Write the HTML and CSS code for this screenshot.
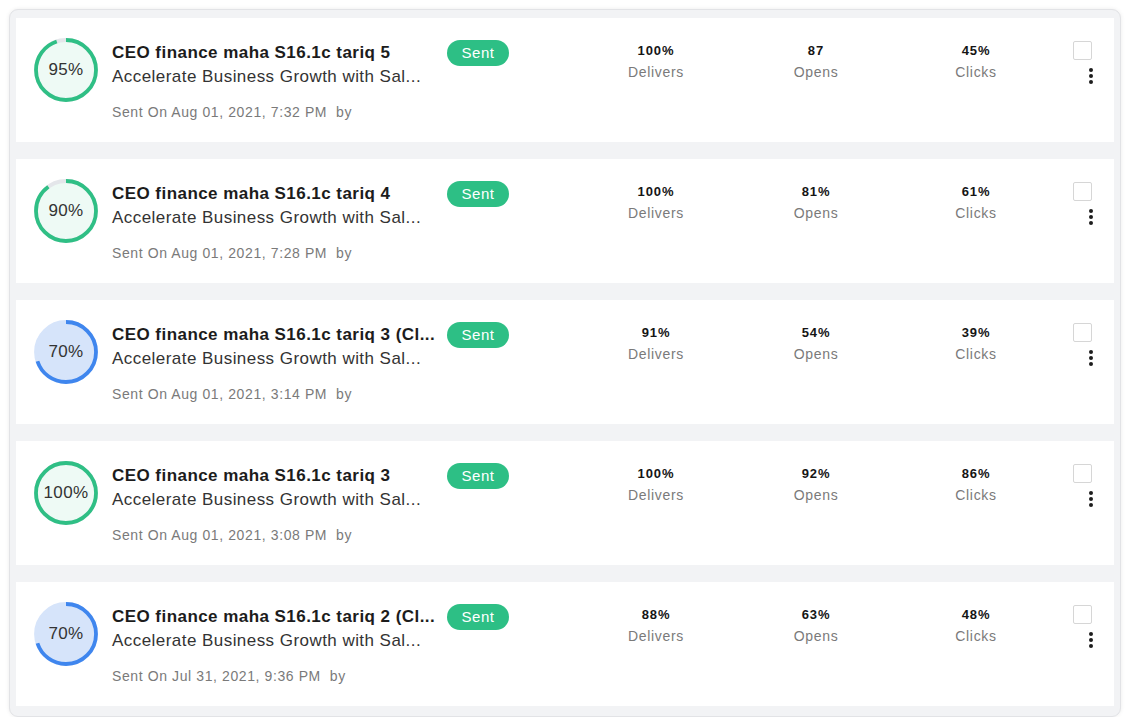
FILE: index.html
```html
<!DOCTYPE html>
<html>
<head>
<meta charset="utf-8">
<link rel="stylesheet" href="styles.css">
</head>
<body>
<div class="frame">
  <div class="card">
    <div class="ring green">
      <svg viewBox="0 0 64 64" width="64" height="64"><circle class="bg" cx="32" cy="32" r="30"/><circle class="arc" cx="32" cy="32" r="30" pathLength="100" stroke-dasharray="95 100" transform="rotate(-90 32 32)"/></svg>
      <span class="pct">95%</span>
    </div>
    <div class="main">
      <div class="title">CEO finance maha S16.1c tariq 5</div>
      <div class="sub">Accelerate Business Growth with Sal...</div>
      <div class="meta">Sent On Aug 01, 2021, 7:32 PM &nbsp;by</div>
    </div>
    <div class="badge">Sent</div>
    <div class="stats">
      <div class="stat"><b>100%</b><span>Delivers</span></div>
      <div class="stat"><b>87</b><span>Opens</span></div>
      <div class="stat"><b>45%</b><span>Clicks</span></div>
    </div>
    <div class="actions"><div class="check"></div><div class="kebab"><i></i><i></i><i></i></div></div>
  </div>

  <div class="card">
    <div class="ring green">
      <svg viewBox="0 0 64 64" width="64" height="64"><circle class="bg" cx="32" cy="32" r="30"/><circle class="arc" cx="32" cy="32" r="30" pathLength="100" stroke-dasharray="90 100" transform="rotate(-90 32 32)"/></svg>
      <span class="pct">90%</span>
    </div>
    <div class="main">
      <div class="title">CEO finance maha S16.1c tariq 4</div>
      <div class="sub">Accelerate Business Growth with Sal...</div>
      <div class="meta">Sent On Aug 01, 2021, 7:28 PM &nbsp;by</div>
    </div>
    <div class="badge">Sent</div>
    <div class="stats">
      <div class="stat"><b>100%</b><span>Delivers</span></div>
      <div class="stat"><b>81%</b><span>Opens</span></div>
      <div class="stat"><b>61%</b><span>Clicks</span></div>
    </div>
    <div class="actions"><div class="check"></div><div class="kebab"><i></i><i></i><i></i></div></div>
  </div>

  <div class="card">
    <div class="ring blue">
      <svg viewBox="0 0 64 64" width="64" height="64"><circle class="bg" cx="32" cy="32" r="30"/><circle class="arc" cx="32" cy="32" r="30" pathLength="100" stroke-dasharray="70 100" transform="rotate(-90 32 32)"/></svg>
      <span class="pct">70%</span>
    </div>
    <div class="main">
      <div class="title">CEO finance maha S16.1c tariq 3 (Cl...</div>
      <div class="sub">Accelerate Business Growth with Sal...</div>
      <div class="meta">Sent On Aug 01, 2021, 3:14 PM &nbsp;by</div>
    </div>
    <div class="badge">Sent</div>
    <div class="stats">
      <div class="stat"><b>91%</b><span>Delivers</span></div>
      <div class="stat"><b>54%</b><span>Opens</span></div>
      <div class="stat"><b>39%</b><span>Clicks</span></div>
    </div>
    <div class="actions"><div class="check"></div><div class="kebab"><i></i><i></i><i></i></div></div>
  </div>

  <div class="card">
    <div class="ring green">
      <svg viewBox="0 0 64 64" width="64" height="64"><circle class="bg" cx="32" cy="32" r="30"/><circle class="arc" cx="32" cy="32" r="30" pathLength="100" stroke-dasharray="100 100" transform="rotate(-90 32 32)"/></svg>
      <span class="pct">100%</span>
    </div>
    <div class="main">
      <div class="title">CEO finance maha S16.1c tariq 3</div>
      <div class="sub">Accelerate Business Growth with Sal...</div>
      <div class="meta">Sent On Aug 01, 2021, 3:08 PM &nbsp;by</div>
    </div>
    <div class="badge">Sent</div>
    <div class="stats">
      <div class="stat"><b>100%</b><span>Delivers</span></div>
      <div class="stat"><b>92%</b><span>Opens</span></div>
      <div class="stat"><b>86%</b><span>Clicks</span></div>
    </div>
    <div class="actions"><div class="check"></div><div class="kebab"><i></i><i></i><i></i></div></div>
  </div>

  <div class="card">
    <div class="ring blue">
      <svg viewBox="0 0 64 64" width="64" height="64"><circle class="bg" cx="32" cy="32" r="30"/><circle class="arc" cx="32" cy="32" r="30" pathLength="100" stroke-dasharray="70 100" transform="rotate(-90 32 32)"/></svg>
      <span class="pct">70%</span>
    </div>
    <div class="main">
      <div class="title">CEO finance maha S16.1c tariq 2 (Cl...</div>
      <div class="sub">Accelerate Business Growth with Sal...</div>
      <div class="meta">Sent On Jul 31, 2021, 9:36 PM &nbsp;by</div>
    </div>
    <div class="badge">Sent</div>
    <div class="stats">
      <div class="stat"><b>88%</b><span>Delivers</span></div>
      <div class="stat"><b>63%</b><span>Opens</span></div>
      <div class="stat"><b>48%</b><span>Clicks</span></div>
    </div>
    <div class="actions"><div class="check"></div><div class="kebab"><i></i><i></i><i></i></div></div>
  </div>
</div>
</body>
</html>
```

FILE: styles.css
```css
html, body {
  margin: 0;
  padding: 0;
  background: #ffffff;
  font-family: "Liberation Sans", Arial, sans-serif;
}

.frame {
  margin: 9px 9px 0 9px;
  box-sizing: border-box;
  padding: 8px 6px 10px 6px;
  background: #f2f3f5;
  border: 1px solid #e2e3e6;
  border-radius: 9px;
  box-shadow: 0 0 4px rgba(0, 0, 0, 0.08);
  display: flex;
  flex-direction: column;
  gap: 17px;
}

.card {
  height: 124px;
  flex: none;
  box-sizing: border-box;
  background: #ffffff;
  padding: 20px 20px 0 18px;
  display: flex;
  align-items: flex-start;
}

.ring {
  position: relative;
  width: 64px;
  height: 64px;
  flex: none;
  margin-right: 14px;
}

.ring svg {
  display: block;
}

.ring .bg {
  stroke: #e4e6ea;
  stroke-width: 3.8;
}

.ring .arc {
  fill: none;
  stroke-width: 3.8;
  stroke-linecap: butt;
}

.ring.green .bg { fill: #eefaf5; }
.ring.green .arc { stroke: #2fbf85; }
.ring.blue .bg { fill: #d6e4fa; stroke: #d6e4fa; }
.ring.blue .arc { stroke: #3f86ee; }

.pct {
  position: absolute;
  inset: 0;
  display: flex;
  align-items: center;
  justify-content: center;
  font-size: 17px;
  letter-spacing: 0.4px;
  color: #333333;
}

.main {
  width: 335px;
  flex: none;
  padding-top: 4px;
}

.title {
  font-size: 17px;
  line-height: 22px;
  font-weight: bold;
  letter-spacing: 0.45px;
  color: #1c1c1c;
  white-space: nowrap;
  overflow: hidden;
}

.sub {
  margin-top: 2px;
  font-size: 17px;
  line-height: 22px;
  letter-spacing: 0.45px;
  color: #333333;
  white-space: nowrap;
}

.meta {
  margin-top: 15px;
  font-size: 14px;
  line-height: 18px;
  color: #7a7a7a;
  letter-spacing: 0.6px;
}

.badge {
  flex: none;
  width: 62px;
  height: 26px;
  margin-top: 2px;
  border-radius: 13px;
  background: #2dbf85;
  color: #ffffff;
  font-size: 15px;
  letter-spacing: 0.5px;
  line-height: 26px;
  text-align: center;
}

.stats {
  flex: none;
  margin-left: 67px;
  padding-top: 5px;
  display: flex;
}

.stat {
  width: 160px;
  display: flex;
  flex-direction: column;
  align-items: center;
}

.stat b {
  font-size: 13px;
  line-height: 16px;
  letter-spacing: 0.9px;
  color: #151515;
}

.stat span {
  margin-top: 3px;
  font-size: 14px;
  line-height: 20px;
  letter-spacing: 0.7px;
  color: #7a7a7a;
}

.actions {
  flex: none;
  margin-left: 17px;
  margin-top: 3px;
  display: flex;
  flex-direction: column;
  align-items: flex-end;
}

.check {
  width: 17px;
  height: 17px;
  border: 1px solid #d6d6d6;
  border-radius: 2px;
  background: #ffffff;
}

.kebab {
  margin-top: 8px;
  width: 5px;
  display: flex;
  flex-direction: column;
  gap: 2px;
  margin-right: -2px;
}

.kebab i {
  display: block;
  width: 4px;
  height: 4px;
  border-radius: 50%;
  background: #1d1d1d;
}
```
